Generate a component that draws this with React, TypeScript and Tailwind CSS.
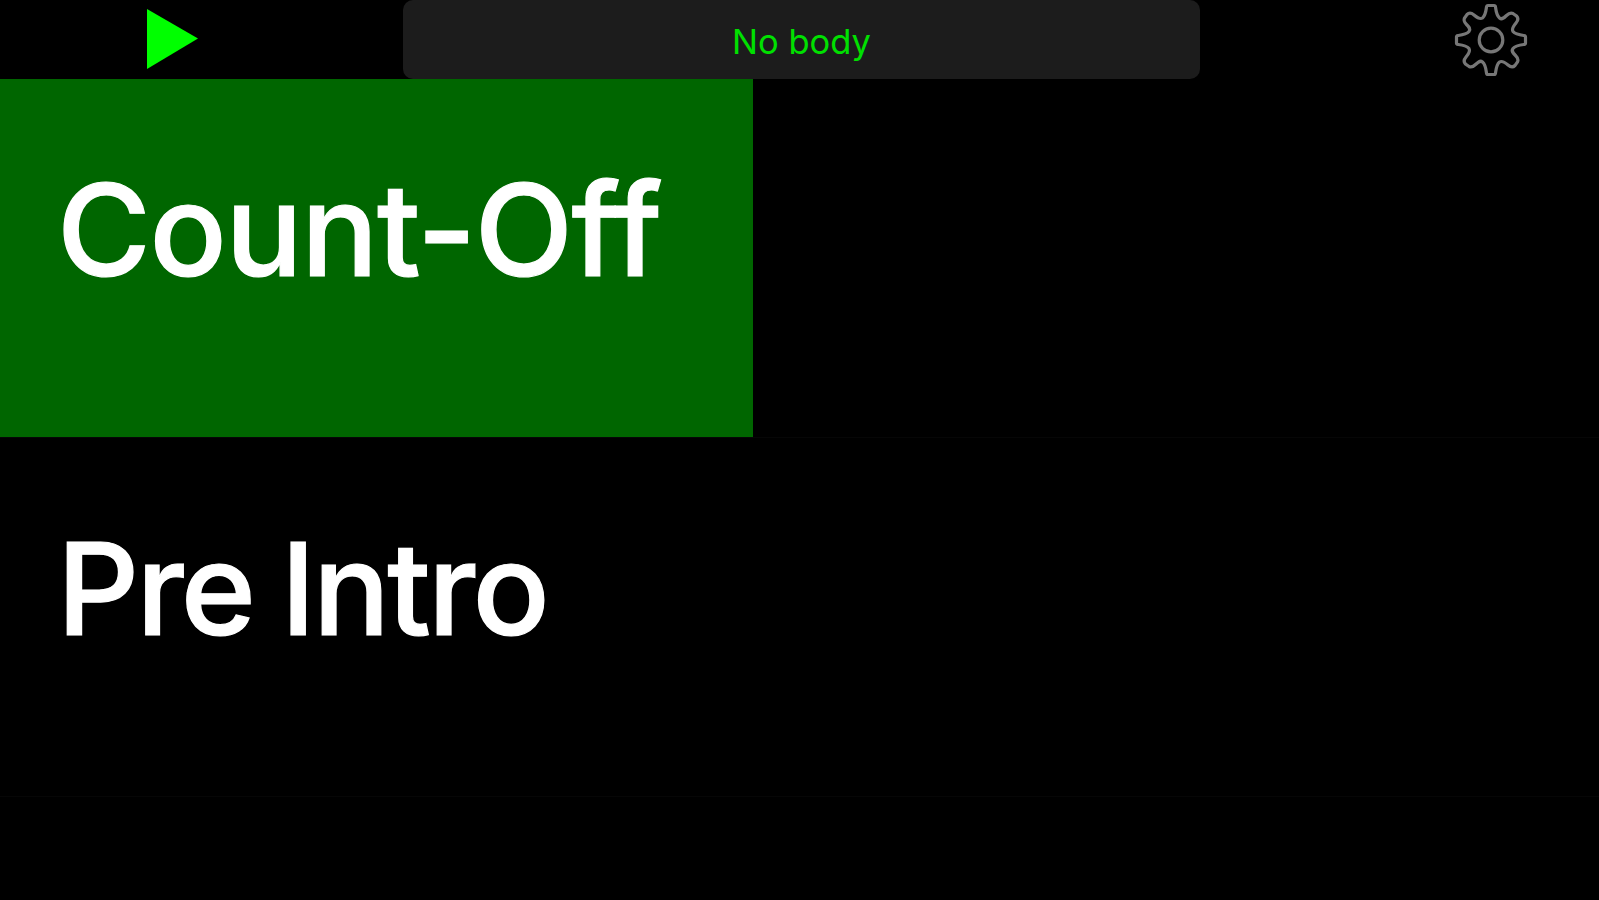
const sections = [
    { name: 'Count-Off', progress: 47.1, spacing: 'tracking-[-1.3px]' },
    { name: 'Pre Intro', progress: 0, spacing: 'tracking-[-2.7px] [word-spacing:-4px]' },
];

function PlayButton() {
    return (
        <button className="w-[403px] shrink-0 h-full pl-[146px] pb-0.5 flex items-center">
            <svg width="53" height="62" viewBox="0 0 53 62" fill="#00ff00">
                <path d="M1 1L52 30.5L1 61Z" />
            </svg>
        </button>
    );
}

// One quarter of the outline: half of the top tooth, the diagonal tooth, half of the right tooth
const quarter =
    'M0 -34.5H3Q4.3 -34.5 4.5 -33C5 -29 5.5 -24.5 8.5 -22C11 -20 13 -22 15.5 -24.5C18 -27 20 -27.5 22 -26.5L25.5 -24C27.5 -22 27.5 -20 25 -17C22 -13.5 20.5 -11 22 -8.5C24.5 -5.5 29 -5 33 -4.5Q34.5 -4.3 34.5 -3V0';

function SettingsButton() {
    return (
        <button className="flex-1 h-full flex items-center pl-[253px]">
            <svg width="76" height="76" viewBox="-38 -38 76 76" fill="none" stroke="#777777" strokeWidth="3.2">
                <path d={quarter} />
                <path d={quarter} transform="rotate(90)" />
                <path d={quarter} transform="rotate(180)" />
                <path d={quarter} transform="rotate(270)" />
                <circle r="11.8" />
            </svg>
        </button>
    );
}

export default function App() {
    return (
        <div className="h-screen w-full bg-black overflow-hidden flex flex-col font-['Inter',sans-serif]">
            <header className="h-[79px] shrink-0 flex items-center">
                <PlayButton />
                <div className="w-[797px] shrink-0 h-full rounded-[10px] bg-[#1c1c1c] flex items-center justify-center">
                    <span className="text-[34.5px] leading-none text-[#00e000] pt-[5px]">No body</span>
                </div>
                <SettingsButton />
            </header>
            <main className="flex-1">
                {sections.map((section) => (
                    <div key={section.name} className="h-[359px] border-b border-[#060606] grid">
                        <div
                            className="col-start-1 row-start-1 bg-[#006600]"
                            style={{ width: `${section.progress}%` }}
                        />
                        <h2
                            className={`col-start-1 row-start-1 pl-[57px] pt-[87px] text-[128px] leading-[128px] font-medium [-webkit-text-stroke:1.2px_white] text-white whitespace-nowrap ${section.spacing}`}
                        >
                            {section.name}
                        </h2>
                    </div>
                ))}
            </main>
        </div>
    );
}
